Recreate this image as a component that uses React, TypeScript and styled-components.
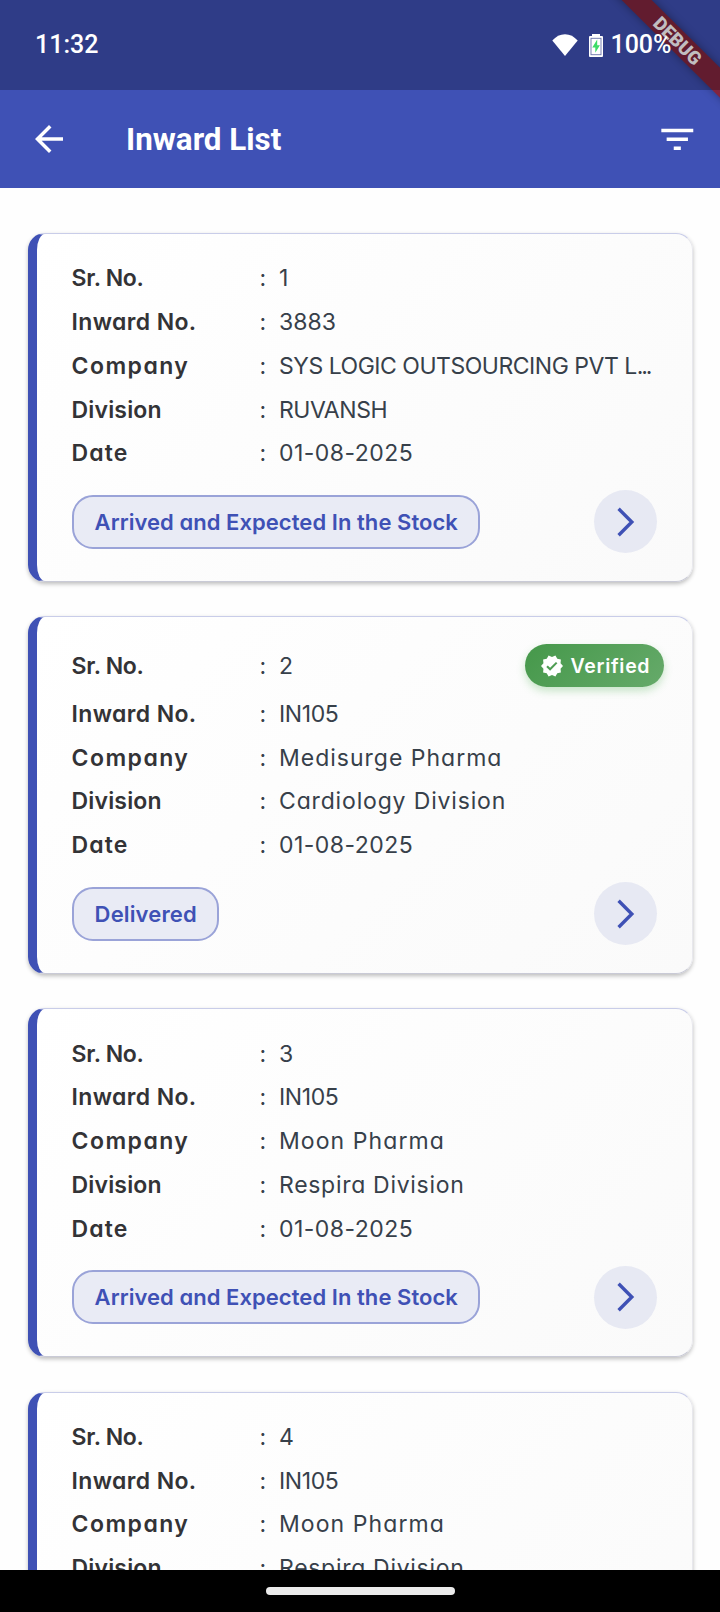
import React from 'react';
import styled, { createGlobalStyle, css } from 'styled-components';
import { MdArrowBack, MdFilterList, MdVerified } from 'react-icons/md';

const INDIGO = '#3f51b5';

const GlobalStyle = createGlobalStyle`
  * { box-sizing: border-box; }
  body { margin: 0; background: #fff; }
`;

const Screen = styled.div`
  position: relative;
  display: flex;
  flex-direction: column;
  width: 720px;
  height: 1612px;
  overflow: hidden;
  background: #fefefe;
  font-family: Inter, 'Open Sans', sans-serif;
  font-feature-settings: 'cv11' 1;
`;

const StatusBar = styled.header`
  display: flex;
  flex: none;
  align-items: center;
  height: 90px;
  padding: 0 48.5px 0 35px;
  background: #2f3c87;
  color: #fff;
  font: 500 25px/30px Roboto, sans-serif;
`;

const Clock = styled.span`
  margin-right: auto;
`;

const StatusIcons = styled.div`
  position: relative;
  z-index: 2;
  display: flex;
  align-items: center;
`;

const WifiIcon = styled.svg`
  width: 26px;
  height: 22px;
  margin-right: 11px;
`;

const BatteryIcon = styled.svg`
  width: 14px;
  height: 23px;
  margin-right: 7px;
`;

const BatteryLevel = styled.span`
  font-size: 25px;
`;

const DebugBanner = styled.svg`
  position: absolute;
  top: 0;
  right: 0;
  z-index: 1;
  width: 120px;
  height: 120px;
`;

const AppBar = styled.div`
  display: flex;
  flex: none;
  align-items: center;
  height: 98px;
  padding: 0 21px 0 28px;
  background: ${INDIGO};
  color: #fff;

  svg { display: block; }
`;

const Title = styled.h1`
  flex: 1;
  margin: 0 0 0 56px;
  padding-top: 2px;
  font: 700 31.4px/40px Roboto, sans-serif;
`;

const List = styled.main`
  flex: 1;
  min-height: 0;
  overflow: hidden;
  padding: 45px 27.5px 0 28px;
`;

const Card = styled.article`
  margin-bottom: 34.4px;
  padding: 22.5px 27.5px 27.6px 34.6px;
  border: 1px solid #e8e8ed;
  border-top-color: #c9cde9;
  border-bottom-color: #c9cad6;
  border-left: 9px solid ${INDIGO};
  border-radius: 17px;
  background: linear-gradient(135deg, #fff, #fafafa) padding-box;
  box-shadow: 0 2px 4px rgba(0, 0, 0, 0.26);
`;

const Row = styled.div<{ $tall?: boolean }>`
  display: grid;
  grid-template-columns: 188px 19.4px 1fr auto;
  align-items: center;
  height: ${p => (p.$tall ? 52.1 : 43.75)}px;
  font-size: 23px;
  line-height: 34px;
  white-space: nowrap;
`;

const tracked = css<{ $tracking?: number }>`
  letter-spacing: ${p => p.$tracking ?? 0}px;
`;

const Label = styled.span`
  ${tracked}
  color: #333336;
  font-weight: 600;
`;

const Colon = styled.span`
  color: #37404a;
`;

const Value = styled.span`
  ${tracked}
  color: #37404a;
  font-weight: 375;
`;

const Ellipsis = styled.span`
  letter-spacing: -2.2px;
`;

const VerifiedBadge = styled.span`
  display: flex;
  align-items: center;
  gap: 7px;
  width: 139px;
  height: 43px;
  padding-left: 14.5px;
  border-radius: 22px;
  background: linear-gradient(135deg, #45984a, #66aa6a);
  box-shadow: 0 4px 8px rgba(76, 175, 80, 0.3);
  color: #fff;
  font-size: 19.5px;
  font-weight: 600;
  letter-spacing: 0.7px;
`;

const Footer = styled.div`
  display: flex;
  align-items: center;
  justify-content: space-between;
  height: 63px;
  margin-top: 15.2px;
  padding-right: 7px;
`;

const StatusChip = styled.span`
  ${tracked}
  height: 54px;
  padding: 0 20.5px 0 21px;
  border: 2px solid #9aa3d8;
  border-radius: 21px;
  background: #e9ebf5;
  color: ${INDIGO};
  font-size: 22px;
  font-weight: 600;
  line-height: 51px;
  white-space: nowrap;
`;

const OpenButton = styled.button`
  display: grid;
  place-items: center;
  width: 63px;
  height: 63px;
  padding: 0;
  border: 0;
  border-radius: 50%;
  background: #e7e9f3;
`;

const NavBar = styled.footer`
  display: flex;
  flex: none;
  justify-content: center;
  height: 42px;
  padding-top: 17px;
  background: #000;
`;

const HomeIndicator = styled.span`
  width: 189px;
  height: 8px;
  border-radius: 4px;
  background: #ebebeb;
`;

interface Inward {
  sr: string;
  no: string;
  company: string;
  division: string;
  date: string;
  status: string;
  verified?: boolean;
}

const TRACKING: Record<string, number> = {
  'Sr. No.': -0.3,
  'Inward No.': 0.36,
  Company: 1.45,
  Division: 0.15,
  Date: 1.1,
  '3883': 0.05,
  'SYS LOGIC OUTSOURCING PVT L...': -0.48,
  RUVANSH: -0.45,
  '01-08-2025': 0.48,
  IN105: -0.4,
  'Medisurge Pharma': 1.0,
  'Cardiology Division': 0.84,
  'Moon Pharma': 1.08,
  'Respira Division': 0.7,
  'Arrived and Expected In the Stock': 0.05,
  Delivered: 0.15,
};

const inwards: Inward[] = [
  { sr: '1', no: '3883', company: 'SYS LOGIC OUTSOURCING PVT L...', division: 'RUVANSH', date: '01-08-2025', status: 'Arrived and Expected In the Stock' },
  { sr: '2', no: 'IN105', company: 'Medisurge Pharma', division: 'Cardiology Division', date: '01-08-2025', status: 'Delivered', verified: true },
  { sr: '3', no: 'IN105', company: 'Moon Pharma', division: 'Respira Division', date: '01-08-2025', status: 'Arrived and Expected In the Stock' },
  { sr: '4', no: 'IN105', company: 'Moon Pharma', division: 'Respira Division', date: '01-08-2025', status: 'Arrived and Expected In the Stock' },
];

function Field({ label, value, tall, children }: { label: string; value: string; tall?: boolean; children?: React.ReactNode }) {
  const cut = value.endsWith('...');
  return (
    <Row $tall={tall}>
      <Label $tracking={TRACKING[label]}>{label}</Label>
      <Colon>:</Colon>
      <Value $tracking={TRACKING[value]}>
        {cut ? value.slice(0, -3) : value}
        {cut && <Ellipsis>...</Ellipsis>}
      </Value>
      {children}
    </Row>
  );
}

function InwardCard({ item }: { item: Inward }) {
  return (
    <Card>
      <Field label="Sr. No." value={item.sr} tall={item.verified}>
        {item.verified && (
          <VerifiedBadge>
            <MdVerified size={24} />
            Verified
          </VerifiedBadge>
        )}
      </Field>
      <Field label="Inward No." value={item.no} />
      <Field label="Company" value={item.company} />
      <Field label="Division" value={item.division} />
      <Field label="Date" value={item.date} />
      <Footer>
        <StatusChip $tracking={TRACKING[item.status]}>{item.status}</StatusChip>
        <OpenButton aria-label="Open">
          <svg width="30" height="30" viewBox="0 0 30 30" fill="none" stroke={INDIGO} strokeWidth="3.4">
            <path d="M7.6 1.8 L20.8 15 L7.6 28.2" />
          </svg>
        </OpenButton>
      </Footer>
    </Card>
  );
}

export default function App() {
  return (
    <Screen>
      <GlobalStyle />
      <StatusBar>
        <Clock>11:32</Clock>
        <StatusIcons>
          <WifiIcon viewBox="0 0 26 22">
            <path d="M13 22 L0.3 6.6 C3.8 2.4 8.2 0.2 13 0.2 S22.2 2.4 25.7 6.6 Z" fill="#fff" />
          </WifiIcon>
          <BatteryIcon viewBox="0 0 14 23">
            <path d="M3 0h8v2h2a1 1 0 0 1 1 1v19a1 1 0 0 1-1 1H1a1 1 0 0 1-1-1V3a1 1 0 0 1 1-1h2z" fill="#fff" />
            <rect x="2" y="4.3" width="10" height="16.4" fill="none" stroke="#6a73aa" strokeWidth="0.9" />
            <path d="M8.2 5.5 L3.3 13.4 H6.3 V18.8 L10.9 11.2 H8.2 Z" fill="#3ddc68" />
          </BatteryIcon>
          <BatteryLevel>100%</BatteryLevel>
        </StatusIcons>
      </StatusBar>
      <AppBar>
        <MdArrowBack size={42} />
        <Title>Inward List</Title>
        <MdFilterList size={42.6} />
      </AppBar>
      <DebugBanner viewBox="600 0 120 120">
        <defs>
          <filter id="bannerShadow" x="-30%" y="-30%" width="160%" height="160%">
            <feGaussianBlur stdDeviation="5" />
          </filter>
          <linearGradient id="bannerFill" x1="0" y1="0" x2="0" y2="120" gradientUnits="userSpaceOnUse">
            <stop offset="0.75" stopColor="#621c2f" />
            <stop offset="0.75" stopColor="#83243f" />
          </linearGradient>
        </defs>
        <path d="M601.5 -20 L721.5 98 L740 116 V88 L631.5 -20 Z" fill="#000" opacity="0.38" filter="url(#bannerShadow)" />
        <path d="M601.5 -20 L740 117.5 V87.5 L631.5 -20 Z" fill="url(#bannerFill)" />
        <text
          transform="translate(677.6 40.8) rotate(45)"
          y="6.6"
          textAnchor="middle"
          fill="#c1bec0"
          fontFamily="Roboto, sans-serif"
          fontSize="18.6"
          fontWeight="900"
        >
          DEBUG
        </text>
      </DebugBanner>
      <List>
        {inwards.map(item => (
          <InwardCard key={item.sr} item={item} />
        ))}
      </List>
      <NavBar>
        <HomeIndicator />
      </NavBar>
    </Screen>
  );
}
